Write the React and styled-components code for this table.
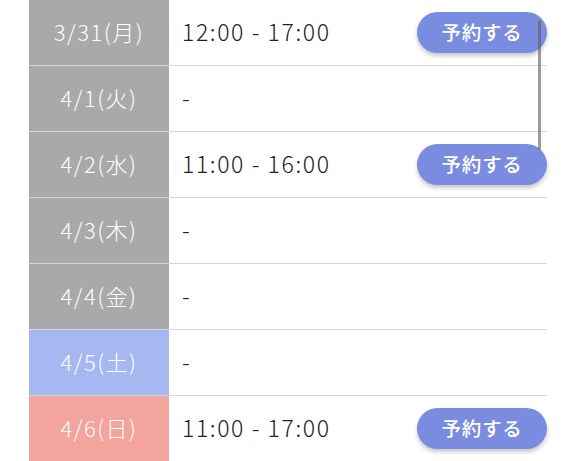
import React from 'react';
import styled, { createGlobalStyle } from 'styled-components';

const GlobalStyle = createGlobalStyle`
  html, body {
    margin: 0;
    padding: 0;
    background: #fff;
    overflow: hidden;
  }
  body {
    font-family: "Noto Sans CJK JP", "Noto Sans", sans-serif;
  }
`;

const Wrapper = styled.div`
  position: relative;
  width: 576px;
  height: 461px;
  overflow: hidden;
`;

const Table = styled.div`
  margin-left: 29px;
  width: 518px;
  display: flex;
  flex-direction: column;
`;

const Row = styled.div`
  display: grid;
  grid-template-columns: 140px 1fr;
  height: 66px;
  box-sizing: border-box;
  border-bottom: 1px solid #d6d6d6;
`;

const DateCell = styled.div`
  display: flex;
  align-items: center;
  justify-content: center;
  background: ${(p) => p.$bg};
  color: #fff;
  font-size: 22px;
  font-weight: 300;
  letter-spacing: 1.5px;
  padding-bottom: 3px;
`;

const TimeCell = styled.div`
  display: flex;
  align-items: center;
  justify-content: space-between;
  padding-left: 13px;
  color: #222;
`;

const TimeText = styled.span`
  font-size: 23px;
  font-weight: 300;
  letter-spacing: 1.6px;
  margin-bottom: 4px;
`;

const ReserveButton = styled.button`
  width: 130px;
  height: 41px;
  border: none;
  border-radius: 21px;
  background: #7a8cdf;
  color: #fff;
  font-family: inherit;
  font-size: 19.5px;
  font-weight: 500;
  letter-spacing: 0.8px;
  padding: 0 0 2px;
  box-shadow: 0 3px 4px rgba(0, 0, 0, 0.22);
  cursor: pointer;
  margin-top: -1px;
`;

const ScrollThumb = styled.div`
  position: absolute;
  left: 538px;
  top: 20px;
  width: 3px;
  height: 130px;
  background: rgba(90, 90, 90, 0.6);
  border-radius: 2px;
`;

const days = [
  { date: '3/31(月)', time: '12:00 - 17:00', bg: '#a9a9a9', open: true },
  { date: '4/1(火)', time: '-', bg: '#a9a9a9' },
  { date: '4/2(水)', time: '11:00 - 16:00', bg: '#a9a9a9', open: true },
  { date: '4/3(木)', time: '-', bg: '#a9a9a9' },
  { date: '4/4(金)', time: '-', bg: '#a9a9a9' },
  { date: '4/5(土)', time: '-', bg: '#a7b7f1' },
  { date: '4/6(日)', time: '11:00 - 17:00', bg: '#f3a49d', open: true },
];

export default function App() {
  return (
    <>
      <GlobalStyle />
      <Wrapper>
        <Table>
          {days.map((d) => (
            <Row key={d.date}>
              <DateCell $bg={d.bg}>{d.date}</DateCell>
              <TimeCell>
                <TimeText>{d.time}</TimeText>
                {d.open && <ReserveButton>予約する</ReserveButton>}
              </TimeCell>
            </Row>
          ))}
        </Table>
        <ScrollThumb />
      </Wrapper>
    </>
  );
}
